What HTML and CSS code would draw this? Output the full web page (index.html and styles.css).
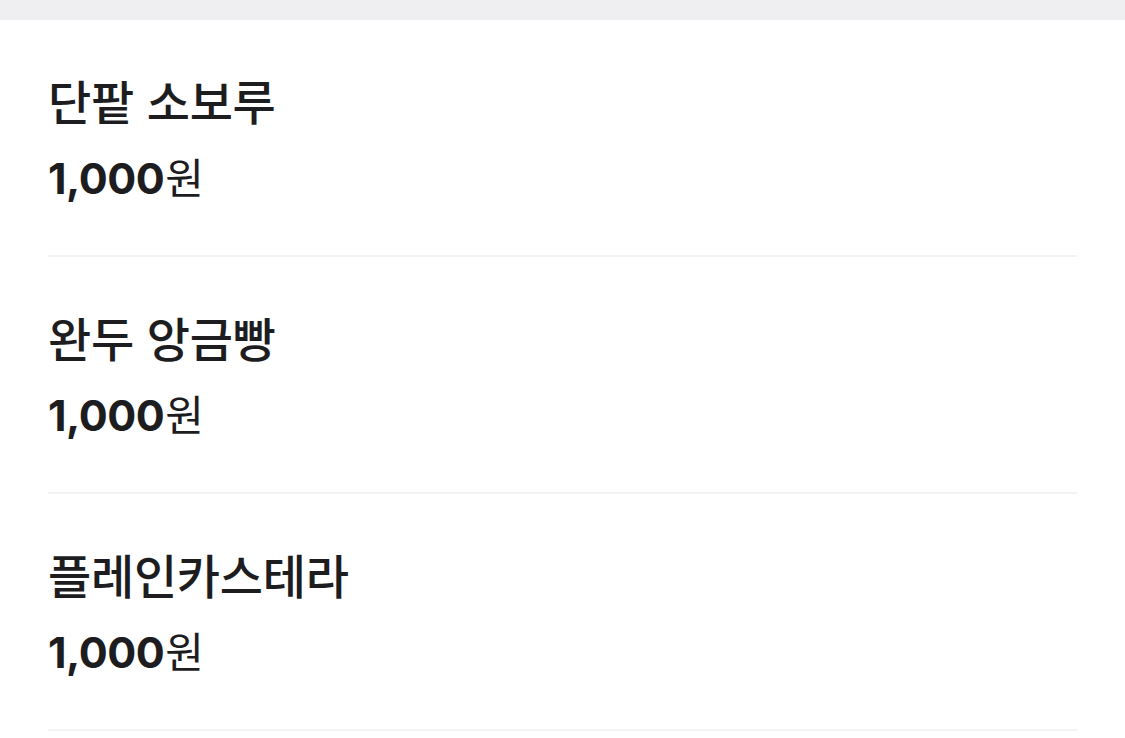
FILE: index.html
```html
<!DOCTYPE html>
<html lang="ko">
<head>
<meta charset="utf-8">
<link rel="stylesheet" href="styles.css">
</head>
<body>
<div class="topbar"></div>
<ul class="menu">
  <li class="item">
    <div class="name">단팥 소보루</div>
    <div class="price"><span class="num">1,000</span><span class="unit">원</span></div>
  </li>
  <li class="item">
    <div class="name">완두 앙금빵</div>
    <div class="price"><span class="num">1,000</span><span class="unit">원</span></div>
  </li>
  <li class="item">
    <div class="name">플레인카스테라</div>
    <div class="price"><span class="num">1,000</span><span class="unit">원</span></div>
  </li>
</ul>
</body>
</html>
```
FILE: styles.css
```css
html, body {
  margin: 0;
  padding: 0;
  background: #ffffff;
}
body {
  font-family: "Noto Sans CJK KR", "Noto Sans", sans-serif;
  color: #1d1d1f;
}
.topbar {
  height: 20px;
  background: #efeff1;
}
.menu {
  list-style: none;
  margin: 0;
  padding: 0 48px;
}
.item {
  padding: 50px 0 51px;
  border-bottom: 2px solid #f3f3f5;
  display: flex;
  flex-direction: column;
  gap: 18px;
}
.name {
  font-size: 47px;
  line-height: 60px;
  height: 60px;
  font-weight: 500;
  letter-spacing: -0.3px;
}
.price {
  display: flex;
  align-items: baseline;
  height: 56px;
  line-height: 56px;
}
.num {
  font-family: "Inter", "Noto Sans CJK KR", sans-serif;
  font-size: 43px;
  font-weight: 700;
  letter-spacing: -0.5px;
}
.unit {
  font-size: 42px;
  font-weight: 400;
  margin-left: 1px;
}
```
